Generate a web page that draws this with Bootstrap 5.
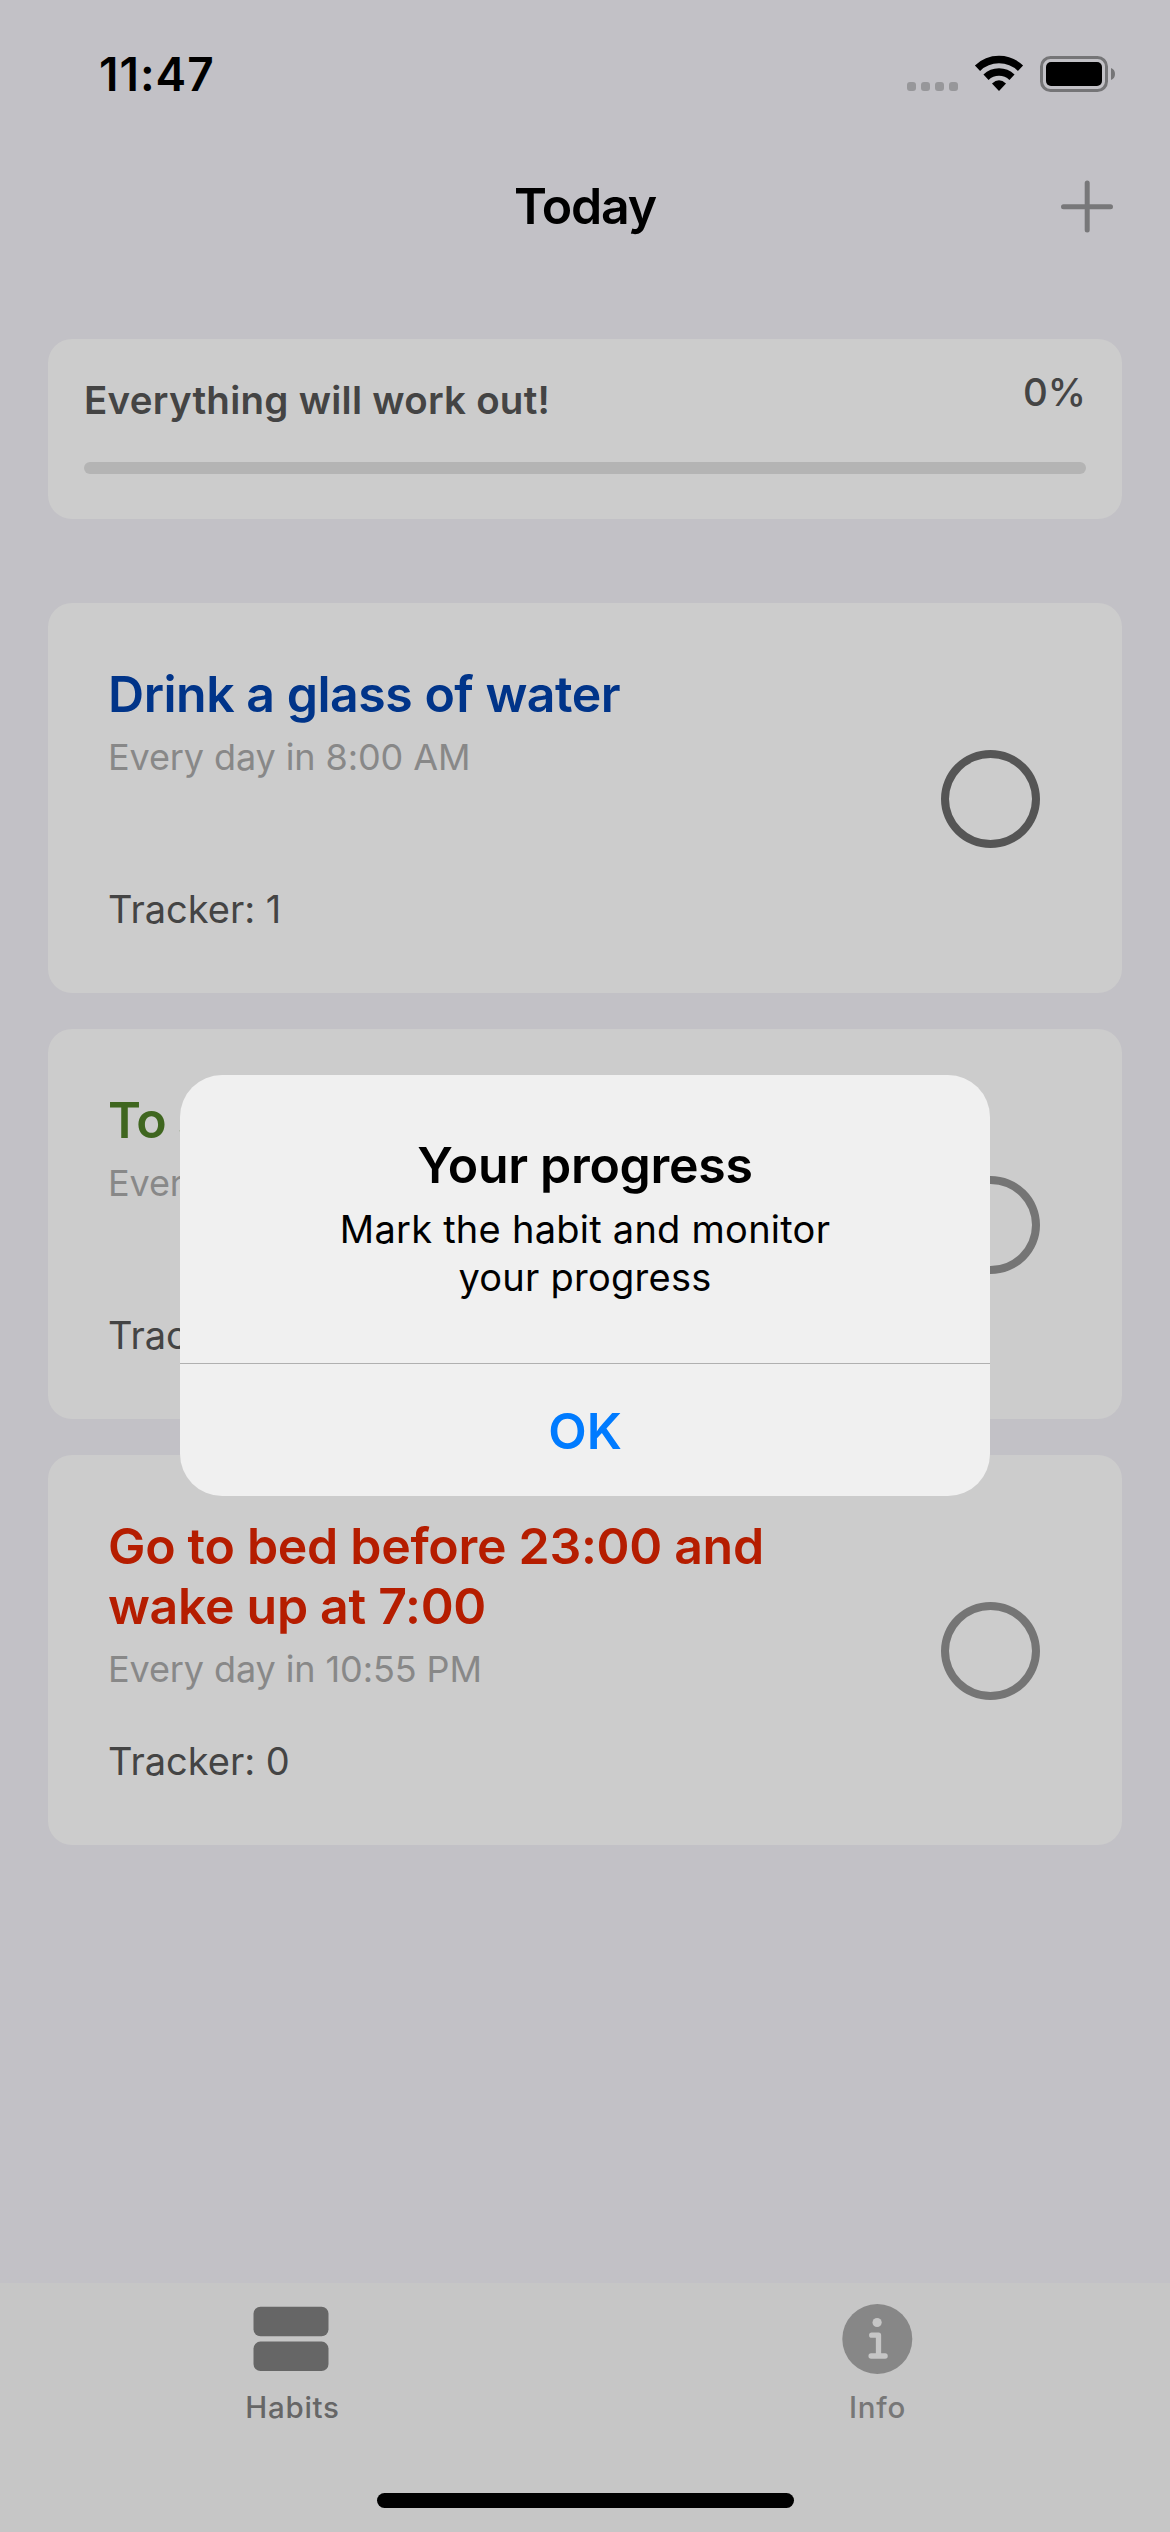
<!DOCTYPE html>
<html lang="en">
<head>
<meta charset="utf-8">
<meta name="viewport" content="width=device-width, initial-scale=1">
<title>Today</title>
<link href="https://cdn.jsdelivr.net/npm/bootstrap@5.3.0/dist/css/bootstrap.min.css" rel="stylesheet">
<style>
body{background:#c2c1c6;font-family:Inter,"Liberation Sans",sans-serif;color:#000}
.screen{width:1170px;height:2532px}
.statusbar{height:141px;padding:48px 54px 0 99px}
.clock{font-size:46px;line-height:52px;font-weight:600;letter-spacing:1px}
.status-icons{margin-top:6px}
.navtop{height:132px}
.nav-title{font-size:50px;line-height:60px;font-weight:600;letter-spacing:-1.2px;margin-top:35px}
.nav-add{right:55px;top:38px}
.tile{background:#ccc;border:0;border-radius:24px}
.progress-tile{height:180px;padding:0 36px;margin-top:66px}
.cheer{font-size:38.5px;line-height:46px;font-weight:600;color:#444;margin-top:38px;letter-spacing:.26px}
.percent{font-size:38.5px;line-height:46px;font-weight:500;color:#444;margin-top:30px}
.track{height:12px;border-radius:6px;background:#b4b4b4;margin-top:39px}
.habit-list{gap:36px;margin-top:84px}
.habit{height:390px;padding:61px 82px 0 60px}
.habit-name{font-size:50px;line-height:60px;font-weight:600}
.habit-time{font-size:36px;line-height:43px;color:#888;margin-top:12px;letter-spacing:-.1px}
.habit-count{font-size:38px;line-height:46px;color:#444;margin-bottom:61px}
.ring{width:99px;height:98px;border:8px solid #757575;border-radius:50%;margin-top:86px}
.ring-on{border-color:#555}
.c-blue{color:#003489;letter-spacing:-.48px}
.c-green{color:#3f661f;letter-spacing:-.9px}
.c-red{color:#b51d00;letter-spacing:-.3px}
.tabs{height:249px;background:#c6c6c6}
.tab-item{width:585px;padding-top:20px}
.tab-label{font-size:29.5px;line-height:36px;font-weight:500;margin-top:14px;letter-spacing:.7px;color:#777}
.tab-item.active .tab-label{color:#666}
.home-bar{width:417px;height:15px;border-radius:8px;background:#000;margin-bottom:24px}
.alert-box{width:810px;height:421px;margin-top:1075px;border-radius:42px;background:#f0f0f0}
.alert-top{height:288px;padding-top:60px}
.alert-title{font-size:50px;line-height:60px;font-weight:600;letter-spacing:-.3px}
.alert-text{font-size:38px;line-height:48px;margin-top:10px;letter-spacing:.25px}
.alert-ok{border-top:1px solid #b0b0b0;color:#007bff;font-size:50px;line-height:60px;font-weight:600;height:133px;padding-top:2px}
</style>
<script src="https://cdn.jsdelivr.net/npm/bootstrap@5.3.0/dist/js/bootstrap.bundle.min.js"></script>
</head>
<body>
<div class="screen d-flex flex-column position-relative overflow-hidden">
 <header class="statusbar d-flex justify-content-between align-items-start">
  <span class="clock">11:47</span>
  <svg class="status-icons" width="210" height="40" viewBox="906 54 210 40">
   <g fill="#97979a"><rect x="907" y="82" width="9" height="9" rx="3"/><rect x="921" y="82" width="9" height="9" rx="3"/><rect x="935" y="82" width="9" height="9" rx="3"/><rect x="949" y="82" width="9" height="9" rx="3"/></g>
   <g fill="none" stroke="#000" stroke-width="7.5"><path d="M977.500 68.200a31 31 0 0 1 43 0"/><path d="M986 77.200a19 19 0 0 1 26 0"/></g>
   <path d="M999 91l-7-7.600q7-6.500 14 0z"/>
   <rect x="1041.500" y="57.500" width="65" height="33" rx="9" fill="none" stroke="#757577" stroke-width="3"/>
   <rect x="1046" y="62" width="56" height="24" rx="5"/>
   <path d="M1111 68q4 1.500 4 6t-4 6z" fill="#757577"/>
  </svg>
 </header>
 <nav class="navtop position-relative d-flex justify-content-center">
  <div class="nav-title">Today</div>
  <svg class="nav-add position-absolute" width="56" height="56" viewBox="1059 179 56 56"><path d="M1063.500 206.800h47M1087.200 183v47" stroke="#78787a" stroke-width="5" stroke-linecap="round"/></svg>
 </nav>
 <main class="flex-grow-1 px-5">
  <section class="card tile progress-tile">
   <div class="d-flex justify-content-between"><div class="cheer">Everything will work out!</div><div class="percent">0%</div></div>
   <div class="track"></div>
  </section>
  <section class="habit-list d-flex flex-column">
   <article class="card tile habit flex-row justify-content-between">
    <div class="d-flex flex-column"><div class="habit-name c-blue">Drink a glass of water</div><div class="habit-time">Every day in 8:00 AM</div><div class="habit-count mt-auto">Tracker: 1</div></div>
    <div class="ring ring-on"></div>
   </article>
   <article class="card tile habit flex-row justify-content-between">
    <div class="d-flex flex-column"><div class="habit-name c-green">To s</div><div class="habit-time">Every</div><div class="habit-count mt-auto">Tracker</div></div>
    <div class="ring"></div>
   </article>
   <article class="card tile habit flex-row justify-content-between">
    <div class="d-flex flex-column"><div class="habit-name c-red">Go to bed before 23:00 and<br>wake up at 7:00</div><div class="habit-time">Every day in 10:55 PM</div><div class="habit-count mt-auto">Tracker: 0</div></div>
    <div class="ring"></div>
   </article>
  </section>
 </main>
 <footer class="tabs d-flex flex-column justify-content-between align-items-center">
  <div class="d-flex">
   <div class="tab-item active text-center">
    <svg class="d-block mx-auto" width="100" height="72" viewBox="242.500 2303 100 72" fill="#666"><rect x="253" y="2306.800" width="75" height="29.400" rx="7"/><rect x="253" y="2341.600" width="75" height="29.400" rx="7"/></svg>
    <div class="tab-label">Habits</div>
   </div>
   <div class="tab-item text-center">
    <svg class="d-block mx-auto" width="100" height="72" viewBox="827.500 2303 100 72"><circle cx="876.800" cy="2339" r="35" fill="#878787"/><circle cx="876.600" cy="2322.500" r="4.600" fill="#c6c6c6"/><path d="M871.200 2335.200H878V2356M870.600 2356H884.600" fill="none" stroke="#c6c6c6" stroke-width="5.300" stroke-linecap="round" stroke-linejoin="round"/></svg>
    <div class="tab-label">Info</div>
   </div>
  </div>
  <div class="home-bar"></div>
 </footer>
 <div class="position-absolute top-0 start-0 w-100 d-flex justify-content-center">
  <div class="alert-box text-center overflow-hidden" role="dialog">
   <div class="alert-top"><div class="alert-title">Your progress</div><div class="alert-text">Mark the habit and monitor<br>your progress</div></div>
   <div class="alert-ok d-flex align-items-center justify-content-center">OK</div>
  </div>
 </div>
</div>
</body>
</html>
